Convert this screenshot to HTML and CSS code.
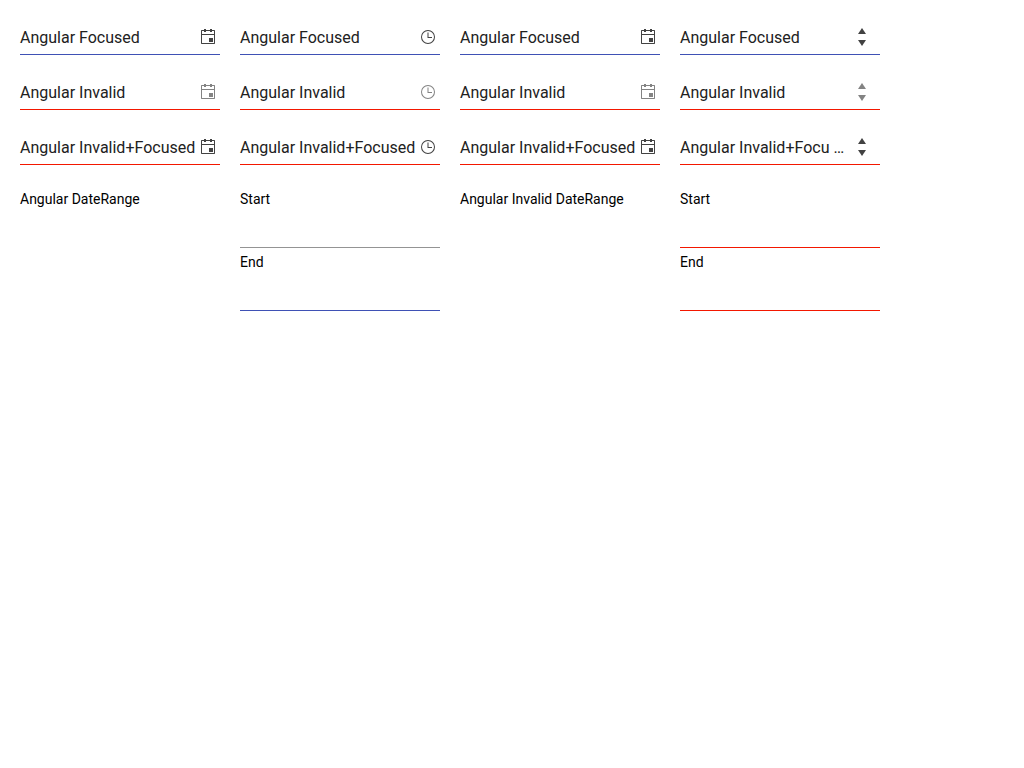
FILE: index.html
```html
<!DOCTYPE html>
<html lang="en">
<head>
<meta charset="utf-8">
<title>Date inputs</title>
<link rel="stylesheet" href="styles.css">
</head>
<body>
<svg class="defs" aria-hidden="true">
<symbol id="calendar" viewBox="0 0 16 16"><path fill-rule="evenodd" d="M4 0h2v1h4V0h2v1h2.500l.5.5v13l-.5.5h-13l-.5-.5v-13L1.500 1H4zM2 2v3h12V2h-2v1h-2V2H6v1H4V2zM2 6v8h12V6zM9 9h4v4H9z"/></symbol>
<symbol id="clock" viewBox="0 0 16 16"><path fill-rule="evenodd" d="M8 1a7 7 0 1 0 0 14A7 7 0 0 0 8 1zm0 13A6 6 0 1 1 8 2a6 6 0 0 1 0 12zM7.500 3.500h1V8H12v1H7.500z"/></symbol>
<symbol id="up" viewBox="0 0 8 6"><path d="M0 6l4-6 4 6z"/></symbol>
<symbol id="down" viewBox="0 0 8 6"><path d="M0 0l4 6 4-6z"/></symbol>
</svg>
<main class="grid">
<div class="field focused"><span class="value">Angular Focused</span><svg class="icon"><use href="#calendar"/></svg></div>
<div class="field focused"><span class="value">Angular Focused</span><svg class="icon"><use href="#clock"/></svg></div>
<div class="field focused"><span class="value">Angular Focused</span><svg class="icon"><use href="#calendar"/></svg></div>
<div class="field focused"><span class="value">Angular Focused</span><span class="spinner"><svg><use href="#up"/></svg><svg><use href="#down"/></svg></span></div>
<div class="field invalid"><span class="value">Angular Invalid</span><svg class="icon"><use href="#calendar"/></svg></div>
<div class="field invalid"><span class="value">Angular Invalid</span><svg class="icon"><use href="#clock"/></svg></div>
<div class="field invalid"><span class="value">Angular Invalid</span><svg class="icon"><use href="#calendar"/></svg></div>
<div class="field invalid"><span class="value">Angular Invalid</span><span class="spinner"><svg><use href="#up"/></svg><svg><use href="#down"/></svg></span></div>
<div class="field error"><span class="value">Angular Invalid+Focused</span><svg class="icon"><use href="#calendar"/></svg></div>
<div class="field error"><span class="value">Angular Invalid+Focused</span><svg class="icon"><use href="#clock"/></svg></div>
<div class="field error"><span class="value">Angular Invalid+Focused</span><svg class="icon"><use href="#calendar"/></svg></div>
<div class="field error"><span class="value">Angular Invalid+Focu …</span><span class="spinner"><svg><use href="#up"/></svg><svg><use href="#down"/></svg></span></div>
</main>
<section class="ranges">
<div>Angular DateRange</div>
<div><label class="range normal">Start</label><label class="range focused">End</label></div>
<div>Angular Invalid DateRange</div>
<div><label class="range invalid">Start</label><label class="range error">End</label></div>
</section>
</body>
</html>
```
FILE: styles.css
```css
* { box-sizing: border-box; }
body { margin: 0; padding: 20px; background: #fff; font: 14px/20px Roboto, sans-serif; color: #000; }
.defs { display: none; }
.grid, .ranges { display: grid; grid-template-columns: repeat(4, 200px); column-gap: 20px; }
.grid { row-gap: 20px; }
.field { height: 35px; border-bottom: 1px solid; display: flex; align-items: center; font-size: 16px; color: #212121; }
.value { flex: 1; white-space: nowrap; padding-top: 2px; }
.icon { width: 16px; height: 16px; margin-right: 4px; fill: #424242; }
.spinner { display: flex; flex-direction: column; width: 8px; margin-right: 14px; gap: 6px; }
.spinner svg { width: 8px; height: 6px; fill: #424242; }
.invalid .icon, .invalid .spinner { opacity: .65; }
.ranges { margin-top: 24px; }
.range { display: block; height: 59px; border-bottom: 1px solid; }
.range + .range { margin-top: 4px; }
.focused { border-color: #3f51b5; }
.normal { border-color: #949494; }
.invalid, .error { border-color: #f31700; }
```
